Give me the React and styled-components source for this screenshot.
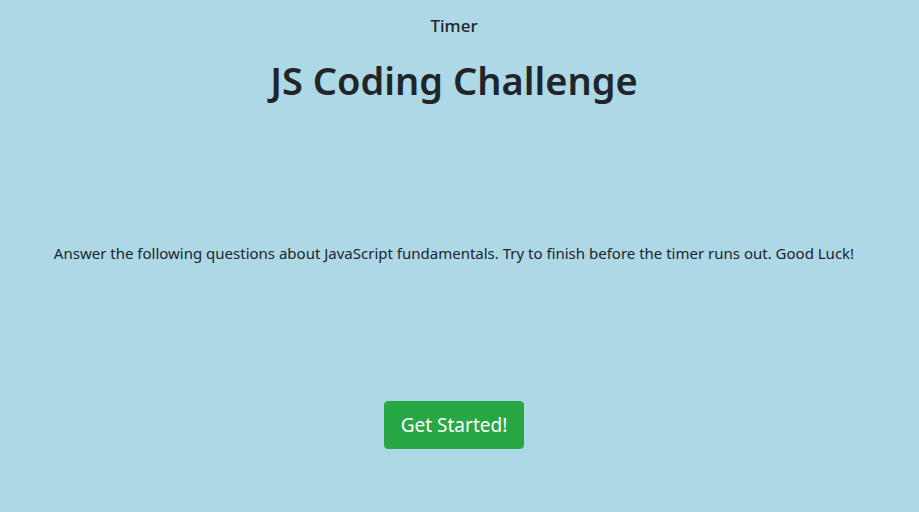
import React from "react";
import styled, { createGlobalStyle } from "styled-components";

const Global = createGlobalStyle`
  html, body { margin: 0; padding: 0; background: #add8e6; }
  body {
    font-family: "Segoe UI", "Noto Sans", "Open Sans", sans-serif;
    color: #212529;
    min-height: 512px;
  }
`;

const Page = styled.main`
  display: flex;
  flex-direction: column;
  align-items: center;
  padding: 14px 11px 0 0;
  text-align: center;
`;

const Timer = styled.div`
  font-size: 17px;
  font-weight: 500;
  line-height: 24px;
`;

const Title = styled.h1`
  margin: 17px 0 0;
  font-size: 38px;
  font-weight: 600;
  line-height: 50px;
`;

const Intro = styled.p`
  margin: 136px 0 0;
  font-size: 15px;
  line-height: 24px;
`;

const StartButton = styled.button`
  margin-top: 136px;
  display: flex;
  align-items: center;
  justify-content: center;
  width: 140px;
  height: 48px;
  padding: 0;
  background: #28a745;
  color: #fff;
  border: 1px solid #28a745;
  border-radius: 4px;
  font-family: inherit;
  font-size: 19px;
  white-space: nowrap;
  cursor: pointer;
`;

export default function App() {
  return (
    <>
      <Global />
      <Page>
        <Timer>Timer</Timer>
        <Title>JS Coding Challenge</Title>
        <Intro>
          Answer the following questions about JavaScript fundamentals. Try to finish before the timer runs out. Good Luck!
        </Intro>
        <StartButton>Get Started!</StartButton>
      </Page>
    </>
  );
}
